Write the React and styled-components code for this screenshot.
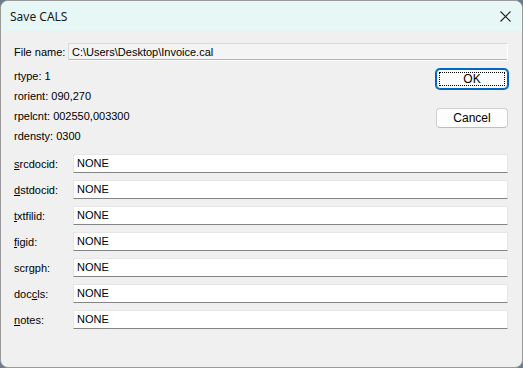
import React from 'react'
import styled, { createGlobalStyle } from 'styled-components'

const Global = createGlobalStyle`
    html, body {
        margin: 0;
        padding: 0;
        background: #6d7b8a;
    }
    * { box-sizing: border-box; }
`;

const Window = styled.div`
    width: 523px;
    height: 368px;
    background: #f0f0f0;
    border: 1px solid #9a9a9a;
    border-radius: 8px;
    overflow: hidden;
    display: flex;
    flex-direction: column;
    font-family: "Liberation Sans", Arial, sans-serif;
    font-size: 11px;
    color: #000;
`;

const TitleBar = styled.div`
    height: 30px;
    flex-shrink: 0;
    background: #e6f7f6;
    display: flex;
    align-items: center;
    justify-content: space-between;
    padding: 0 10px 0 9px;
`;

const Title = styled.span`
    font-family: "Noto Sans", "Liberation Sans", sans-serif;
    font-size: 12px;
    color: #1a1a1a;
`;

const CloseButton = styled.div`
    width: 14px;
    height: 14px;
    display: flex;
    align-items: center;
    justify-content: center;
`;

const Body = styled.div`
    flex: 1;
    padding: 12px 14px 0 12px;
    display: flex;
    flex-direction: column;
`;

const FileRow = styled.div`
    display: flex;
    align-items: center;
    height: 18px;
`;

const FileLabel = styled.span`
    width: 55px;
    padding-left: 1px;
`;

const ReadOnlyField = styled.div`
    flex: 1;
    height: 18px;
    background: #f4f4f4;
    border: 1px solid #d9d9d9;
    border-bottom-color: #fdfdfd;
    border-right-color: #fdfdfd;
    box-shadow: inset 0 -1px 0 #b4b4b4;
    padding: 0 3px;
    line-height: 16px;
`;

const InfoSection = styled.div`
    display: flex;
    justify-content: space-between;
    margin-top: 5px;
`;

const InfoList = styled.div`
    display: flex;
    flex-direction: column;
    padding-left: 1px;
`;

const InfoLine = styled.div`
    height: 20px;
    line-height: 20px;
`;

const ButtonColumn = styled.div`
    display: flex;
    flex-direction: column;
    gap: 19px;
    padding-top: 3px;
`;

const Button = styled.div`
    width: 72px;
    height: 20px;
    background: #fdfdfd;
    border: 1px solid ${p => (p.$default ? '#0067c0' : '#d0d0d0')};
    border-bottom-color: ${p => (p.$default ? '#0067c0' : '#bdbdbd')};
    box-shadow: ${p => (p.$default ? '0 0 0 1px #0067c0' : 'none')};
    border-radius: 4px;
    display: flex;
    align-items: center;
    justify-content: center;
    font-size: 12px;
    position: relative;
`;

const FocusRing = styled.div`
    position: absolute;
    inset: 2px;
    border: 1px dotted #000;
`;

const FieldList = styled.div`
    display: flex;
    flex-direction: column;
    gap: 7px;
    margin-top: 8px;
`;

const FieldRow = styled.div`
    display: flex;
    align-items: center;
    height: 19px;
`;

const FieldLabel = styled.span`
    width: 60px;
    padding-left: 1px;
`;

const TextInput = styled.div`
    flex: 1;
    height: 19px;
    background: #fff;
    border: 1px solid #e6e6e6;
    border-bottom: 1px solid #848484;
    padding: 0 3px;
    line-height: 16px;
    font-size: 11px;
`;

const fields = [
    ['s', 'rcdocid:'],
    ['d', 'stdocid:'],
    ['t', 'xtfilid:'],
    ['f', 'igid:'],
    ['', 'scrgph:'],
    ['doc', 'c', 'ls:'],
    ['n', 'otes:'],
];

const renderLabel = parts => {
    if (parts.length === 3) {
        return <>{parts[0]}<u>{parts[1]}</u>{parts[2]}</>
    }
    return <>{parts[0] && <u>{parts[0]}</u>}{parts[1]}</>
};

export default () => {
    return (
        <>
            <Global/>
            <Window>
                <TitleBar>
                    <Title>Save CALS</Title>
                    <CloseButton>
                        <svg width="11" height="11" viewBox="0 0 11 11">
                            <path d="M0.5 0.5 L10.5 10.5 M10.5 0.5 L0.5 10.5" stroke="#222" strokeWidth="1.1"/>
                        </svg>
                    </CloseButton>
                </TitleBar>
                <Body>
                    <FileRow>
                        <FileLabel>File name:</FileLabel>
                        <ReadOnlyField>C:\Users\Desktop\Invoice.cal</ReadOnlyField>
                    </FileRow>
                    <InfoSection>
                        <InfoList>
                            <InfoLine>rtype: 1</InfoLine>
                            <InfoLine>rorient: 090,270</InfoLine>
                            <InfoLine>rpelcnt: 002550,003300</InfoLine>
                            <InfoLine>rdensty: 0300</InfoLine>
                        </InfoList>
                        <ButtonColumn>
                            <Button $default>OK<FocusRing/></Button>
                            <Button>Cancel</Button>
                        </ButtonColumn>
                    </InfoSection>
                    <FieldList>
                        {fields.map((f, i) => (
                            <FieldRow key={i}>
                                <FieldLabel>{renderLabel(f)}</FieldLabel>
                                <TextInput>NONE</TextInput>
                            </FieldRow>
                        ))}
                    </FieldList>
                </Body>
            </Window>
        </>
    )
}
